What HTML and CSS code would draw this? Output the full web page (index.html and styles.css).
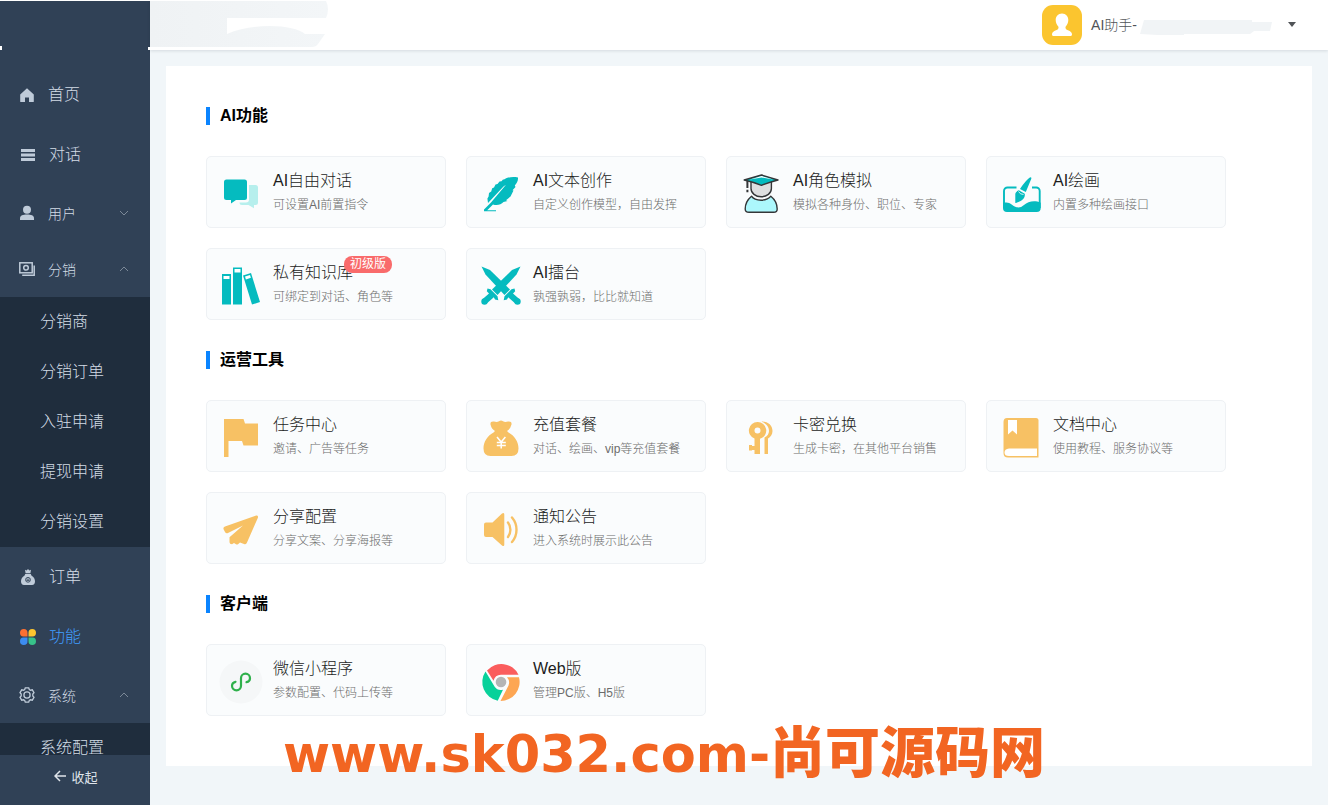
FILE: index.html
```html
<!DOCTYPE html>
<html lang="zh-CN">
<head>
<meta charset="utf-8">
<title>功能</title>
<link rel="stylesheet" href="styles.css">
</head>
<body>
<div class="app">
  <aside class="sidebar">
    <nav class="menu">
      <a class="item" href="#"><svg class="ico" viewBox="0 0 16 16"><path fill="currentColor" d="M8 1.200 1.200 7.600V14.400a.6.6 0 0 0 .6.600H6V10.500h4V15h4.200a.6.6 0 0 0 .6-.6V7.600z"/></svg><span>首页</span></a>
      <a class="item shifted" href="#"><svg class="ico" viewBox="0 0 16 16"><path fill="currentColor" d="M1 2h14v3H1zM1 6.500h14v3H1zM1 11h14v3H1z"/></svg><span>对话</span></a>
      <button class="item group" type="button"><svg class="ico" viewBox="0 0 16 16"><circle cx="8" cy="4.800" r="4" fill="currentColor"/><path fill="currentColor" d="M1 15v-1.500C1 10.500 4 9.600 8 9.600s7 .9 7 3.900V15z"/></svg><span>用户</span><svg class="chev" viewBox="0 0 10 6"><path d="M1 1l4 4 4-4"/></svg></button>
      <button class="item group" type="button"><svg class="ico" viewBox="0 0 16 16" fill="none" stroke="currentColor" stroke-width="1.500"><rect x=".8" y="1.800" width="12.400" height="10"/><circle cx="7" cy="6.800" r="2.300"/><path d="M3.200 14.200h12V4.500"/></svg><span>分销</span><svg class="chev" viewBox="0 0 10 6"><path d="M1 5l4-4 4 4"/></svg></button>
      <div class="sub">
        <a href="#">分销商</a><a href="#">分销订单</a><a href="#">入驻申请</a><a href="#">提现申请</a><a href="#">分销设置</a>
      </div>
      <a class="item shifted" href="#"><svg class="ico" viewBox="0 0 16 16"><path fill="currentColor" d="M5 .8l1.600.8L8 0l1.400 1.600L11 .8l-.6 3.400H5.600zM5.200 5h5.600l.6 1.400C13.800 7.800 15 10 15 12.300 15 14.500 14 16 12 16H4c-2 0-3-1.500-3-3.700C1 10 2.200 7.800 4.600 6.400z"/><circle cx="8" cy="10.800" r="2.400" fill="none" stroke="#304156" stroke-width=".9"/><path stroke="#304156" stroke-width=".8" d="M6.500 10.200h3M6.500 11.500h3"/></svg><span>订单</span></a>
      <a class="item shifted active" href="#"><svg class="ico" viewBox="0 0 16 16"><path fill="#fc7032" d="M3.800 0A3.800 3.800 0 0 0 0 3.800C0 6 1 7.500 3.500 7.500h4V3.800A3.800 3.800 0 0 0 3.800 0z"/><path fill="#fcc52f" d="M12.200 0A3.800 3.800 0 0 1 16 3.800c0 2.200-1 3.700-3.500 3.700h-4V3.800A3.800 3.800 0 0 1 12.200 0z"/><path fill="#3c8cf0" d="M3.800 16A3.800 3.800 0 0 1 0 12.200C0 10 1 8.500 3.500 8.500h4v3.700A3.800 3.800 0 0 1 3.800 16z"/><path fill="#37c28a" d="M12.200 16a3.800 3.800 0 0 0 3.800-3.800c0-2.200-1-3.700-3.500-3.700h-4v3.700a3.800 3.800 0 0 0 3.700 3.800z"/></svg><span>功能</span></a>
      <button class="item group" type="button"><svg class="ico" viewBox="0 0 16 16" fill="none" stroke="currentColor" stroke-width="1.300"><path d="M6.300.8h3.400l.6 1.700 1.200.7 1.800-.4L15 5.700 13.800 7v2l1.200 1.300-1.700 2.900-1.800-.4-1.200.7-.6 1.700H6.300l-.6-1.700-1.200-.7-1.800.4L1 10.300 2.200 9V7L1 5.700l1.700-2.900 1.800.4 1.200-.7z"/><circle cx="8" cy="8" r="3.100"/></svg><span>系统</span><svg class="chev" viewBox="0 0 10 6"><path d="M1 5l4-4 4 4"/></svg></button>
      <div class="sub"><a href="#">系统配置</a></div>
    </nav>
    <button class="fold" type="button"><svg viewBox="0 0 12 12"><path d="M12 6H1M6 1L1 6l5 5"/></svg>收起</button>
  </aside>

  <div class="main">
    <header class="top">
      <svg class="smudge" viewBox="-2 0 182 49"><defs><linearGradient id="haze"><stop offset="0" stop-color="#eff2f4"/><stop offset="1" stop-color="#f3f6f8"/></linearGradient></defs><path fill="#fff" d="M-2 46H180V49H-2z"/><path fill="url(#haze)" d="M0 0H176Q180 8 176 17H77V33C105 21 145 24 155 33H175L168 43Q166 46 162 46H0z"/></svg>
      <button class="user" type="button">
        <svg class="avatar" viewBox="0 0 40 40"><rect width="40" height="40" rx="11" fill="#fbc52f"/><path fill="#fff" d="M20 8.500c-4 0-6.300 3-6.300 6.500 0 3 1.200 5 2.600 6.500.8 2-.3 3-2.300 3.800-2.500 1-4 2-4 4.200 0 1 .8 1.500 2 1.500h16c1.200 0 2-.5 2-1.500 0-2.200-1.500-3.200-4-4.200-2-.8-3.100-1.800-2.300-3.800 1.400-1.500 2.600-3.500 2.600-6.500 0-3.500-2.300-6.500-6.300-6.500z"/></svg>
        <span>AI助手-</span>
        <svg class="blot" viewBox="0 0 134 16"><path fill="#f1f4f6" d="M4 0H112V2H132L130 11H114L110 14H44V15H18L0 14z"/></svg>
        <svg class="caret" viewBox="0 0 8 5"><path fill="#505357" d="M0 0h8L4 5z"/></svg>
      </button>
    </header>

    <main class="panel">
      <section>
        <h2>AI功能</h2>
        <div class="cards">
          <a class="card" href="#">
            <svg viewBox="0 0 40 40"><path fill="#b6efed" d="M28 13h6.500a2.500 2.500 0 0 1 2.500 2.500v15a2.500 2.500 0 0 1-2.500 2.500H33v3.200L27.500 33H21q-2.500 0-2.500-2.500H25q3 0 3-3z"/><path fill="#05bbbf" d="M5.500 7.500h18A2.500 2.500 0 0 1 26 10v15.500a2.500 2.500 0 0 1-2.500 2.500H15l-5 3.500V28H5.500A2.500 2.500 0 0 1 3 25.500V10a2.500 2.500 0 0 1 2.500-2.500z"/></svg>
            <span class="txt"><b>AI自由对话</b><small>可设置AI前置指令</small></span></a>
          <a class="card" href="#">
            <svg viewBox="0 0 40 40"><path fill="#05bbbf" d="M37 5.500C31 4.500 26 5.500 23 7.500l-1 .1-1.500 1.600-2 .3-2 2.500-2 .5-1.500 3-1.800.8-1 3.200L8 21l-.4 3.500-1.200 2L7 31 22.500 14.500l2.500-1.800L10 30.500 3 37.500V39.200H15V38.300H6.200L12 32.500c4 1.200 8 .3 10.500-2.500l4-1-1.500-.8 4.500-3.700 3-6-1-.2L34.500 15 33.800 13.500C36 11 37.200 8.500 37 5.500z"/></svg>
            <span class="txt"><b>AI文本创作</b><small>自定义创作模型，自由发挥</small></span></a>
          <a class="card" href="#">
            <svg viewBox="0 0 40 40" stroke="#343638" stroke-width="1.400" stroke-linejoin="round"><path fill="#dedfe0" d="M10 8v8.500c0 4.500 4.500 8.300 10.200 8.300s10.200-3.800 10.200-8.300V8z"/><path fill="#05bbbf" d="M3.200 8Q12 5.500 20.500 3 29 5.500 37 8 29 10 20.500 13.300 12 10 3.200 8z"/><path fill="#fff" stroke="none" d="M9 7.500Q15 5.500 20.500 4 26 5.500 32 7.500L20.500 5.500z"/><path fill="none" d="M6.400 9v7M6.400 17.800v2.500" stroke-width="2"/><path fill="#acf7fc" d="M10.500 24.200C14 29.500 26 29.500 29.800 24.200 34 27.500 36.200 31.500 36.200 37q0 3.300-3.500 3.300H8Q4.200 40.300 4.200 37C4.200 31.500 6.500 27.500 10.500 24.200z"/></svg>
            <span class="txt"><b>AI角色模拟</b><small>模拟各种身份、职位、专家</small></span></a>
          <a class="card" href="#">
            <svg viewBox="0 0 40 40"><path fill="none" stroke="#05bbbf" stroke-width="1.900" d="M15.500 15.500H6.500A3.500 3.500 0 0 0 3 19v17M31 15.500h4.200a3.500 3.500 0 0 1 3.500 3.500v17"/><path fill="#05bbbf" d="M2 31c4-1 6-.5 9 1.800 5 3.700 8 3.500 12 .2 4-3.300 10-5 16.700-2.300V36a4 4 0 0 1-4 4H6a4 4 0 0 1-4-4zM29.500 5.300c1 0 1 .7.700 1.700L24.800 20 19 17C22.500 11.500 27 6.500 29.500 5.300zM17.800 18.300l6 3.500c.6 5-3.500 7.600-9.500 9.200V22c0-1.500 1.500-3 3.500-3.700z"/><path stroke="#fff" stroke-width=".8" fill="none" d="M17.500 19.500q1.500 3 5 3"/></svg>
            <span class="txt"><b>AI绘画</b><small>内置多种绘画接口</small></span></a>
          <a class="card" href="#">
            <svg viewBox="0 0 40 40"><path fill="#05bbbf" d="M1 10h9v30.500H1zM12 3.500h9v37h-9zM22 11.500L30 9l9 29-8 2.500z"/><path fill="#fff" d="M2.500 12h6v3h-6zM13.500 5h6v3.500h-6zM24 12.500l5-1.600.9 2.900-5 1.600z"/></svg>
            <span class="txt"><b>私有知识库<em class="badge">初级版</em></b><small>可绑定到对话、角色等</small></span></a>
          <a class="card" href="#">
            <svg viewBox="0 0 40 40"><g id="sword" fill="#05bbbf"><path d="M39.500 2.500l-4 8L16.500 31l-5.500-5.500L31 6z"/><path d="M6.500 24.500l3 .7 7 7 .8 4-3.300-.7-1.200-2.200-6.500 5.700-4.300-4.300 6-5.200-2.200-2.200z"/><circle cx="3.500" cy="37.500" r="3.200"/></g><use href="#sword" transform="matrix(-1 0 0 1 40 0)"/></svg>
            <span class="txt"><b>AI擂台</b><small>孰强孰弱，比比就知道</small></span></a>
        </div>
      </section>

      <section>
        <h2>运营工具</h2>
        <div class="cards">
          <a class="card" href="#">
            <svg viewBox="0 0 40 40" fill="#f7c164"><path d="M3 3h19.500l1.500 4.500h13v22H22.500L21 25H7.500v16H3z"/></svg>
            <span class="txt"><b>任务中心</b><small>邀请、广告等任务</small></span></a>
          <a class="card" href="#">
            <svg viewBox="0 0 40 40" fill="#f7c164"><path d="M13 5.500q3 1 5-.3 2-1.300 4 0 2 1.300 5 .3 4-.5 3.500 3-1 4.500-4.500 6.500l1.500 1.500C34 20 37.500 26 37.500 32.500q0 7.500-7 7.500h-21q-7 0-7-7.500C2.500 26 6 20 12.500 16.500L14 15q-3.500-2-4.500-6.500-.5-3.500 3.500-3z"/><path fill="none" stroke="#fff" stroke-width="1.500" d="M16 21l4.200 5 4.200-5M20.200 26v6.500M15.800 26.500h9M15.800 29.500h9"/></svg>
            <span class="txt"><b>充值套餐</b><small>对话、绘画、vip等充值套餐</small></span></a>
          <a class="card" href="#">
            <svg viewBox="0 0 40 40" fill="#f7c164"><path d="M20.500 5.500c7 0 11 4 11 9.500 0 3.500-2 6-4.500 7.500V38h-3.500V21.500C26.500 20 28 17.500 28 15c0-4.500-3-7.500-7.500-9.500z"/><path fill-rule="evenodd" d="M16.500 6a8.500 8.500 0 0 0-3 16.500V30H11v-1H8v5.500h3V34h2.500v4h5.500V22.700A8.500 8.500 0 0 0 16.500 6zm0 5.500a3 3 0 1 1 0 6 3 3 0 0 1 0-6z"/></svg>
            <span class="txt"><b>卡密兑换</b><small>生成卡密，在其他平台销售</small></span></a>
          <a class="card" href="#">
            <svg viewBox="0 0 40 40" fill="#f7c164"><path d="M6 2h29a2.500 2.500 0 0 1 2.500 2.500v37H7q-4.500 0-4.500-4.500V6Q2.500 2 6 2z"/><path fill="#fff" d="M7 4h9v14.500l-4.500-4-4.500 4zM8 32.500H36v7.500H8q-4.500 0-4.500-3.500T8 32.500z"/></svg>
            <span class="txt"><b>文档中心</b><small>使用教程、服务协议等</small></span></a>
          <a class="card" href="#">
            <svg viewBox="0 0 40 40" fill="#f7c164"><path d="M34.500 7.700c2-.6 3 .5 2.300 2.300L26 34.500q-.8 2.500-3 1.500l-4-1.500-2 1.700q-1 .8-2 0L13 35l-2 1.200q-2.500 0-2.500-2v-5L22 17.500 7 25q-2 .7-3-1l-1.300-2.500q-1-2 1.300-3z"/></svg>
            <span class="txt"><b>分享配置</b><small>分享文案、分享海报等</small></span></a>
          <a class="card" href="#">
            <svg viewBox="0 0 40 40" fill="#f7c164"><path d="M5 14.500h6.500L21 5.500q2.300-1.500 2.300 1v30q0 2.500-2.300 1L11.500 29H5q-2 0-2-2V16.500q0-2 2-2z"/><path fill="none" stroke="#f7c164" stroke-width="2.400" stroke-linecap="round" d="M27 14.500c3.200 4 3.200 10.500 0 14.500M31 9.500c6 7 6 17.500 0 24.500"/></svg>
            <span class="txt"><b>通知公告</b><small>进入系统时展示此公告</small></span></a>
        </div>
      </section>

      <section>
        <h2>客户端</h2>
        <div class="cards">
          <a class="card" href="#">
            <svg viewBox="0 0 40 40"><circle cx="20" cy="22" r="21.500" fill="#f5f7f8"/><path fill="none" stroke="#2fb04b" stroke-width="2.200" stroke-linecap="round" d="M25.500 22.200c2-.4 3.500-2 3.500-4a4.500 4.500 0 0 0-9 0v7.600a4.500 4.500 0 0 1-9 0c0-2 1.500-3.600 3.500-4"/></svg>
            <span class="txt"><b>微信小程序</b><small>参数配置、代码上传等</small></span></a>
          <a class="card" href="#">
            <svg viewBox="0 0 40 40"><path fill="#fa5d5d" d="M6 10.500a19 19 0 0 1 31.500 4.300H20a8 8 0 0 0-7.500 6z"/><path fill="#fda653" d="M38 17.200a19 19 0 0 1-18.500 23.800l8-15.500a8 8 0 0 0-1.500-8.300z"/><path fill="#08d19a" d="M4.500 11.500a19 19 0 0 0 12.200 29.200l5.300-10.900a8 8 0 0 1-8.500-3.200z"/><circle cx="20" cy="22" r="5.300" fill="#b5b5b5"/></svg>
            <span class="txt"><b>Web版</b><small>管理PC版、H5版</small></span></a>
        </div>
      </section>
    </main>
  </div>
</div>
<div class="watermark"><span>www.sk032.com-</span><span class="cn">尚可源码网</span></div>
</body>
</html>
```
FILE: styles.css
```css
* { box-sizing: border-box; }
body {
  margin: 0;
  font-family: "Liberation Sans", "Noto Sans CJK SC", sans-serif;
  background: #f1f6f9;
}
a { color: inherit; text-decoration: none; }
button { border: 0; padding: 0; background: none; font: inherit; color: inherit; cursor: pointer; }

.app {
  display: flex;
  height: 100vh;
  overflow: hidden;
  border-top: 1px solid #fff;
}

.sidebar {
  display: flex;
  flex-direction: column;
  flex: 0 0 150px;
  background: linear-gradient(#fff, #fff) 0 45px / 2px 4px no-repeat #304156;
  color: #d3dce6;
  font-weight: 300;
}
.menu { flex: 1; min-height: 0; overflow: hidden; padding-top: 64px; }
.item {
  display: flex;
  align-items: center;
  gap: 13px;
  width: 100%;
  height: 60px;
  padding: 0 21px 0 19px;
  font-size: 16px;
}
.item span { padding-bottom: 4px; }
.item.shifted { padding-left: 20px; }
.item.group { height: 56px; font-size: 14px; }
.item.group span { padding-bottom: 1px; }
.item.active { color: #409eff; }
.ico { width: 16px; height: 16px; color: #bfcbd9; }
.chev { width: 10px; height: 6px; margin-left: auto; fill: none; stroke: #7c8998; stroke-width: 1; }
.sub { background: #1f2d3d; }
.sub a { display: block; height: 50px; padding-left: 40px; line-height: 50px; font-size: 16px; }
.fold {
  display: flex;
  align-items: center;
  justify-content: center;
  gap: 5px;
  flex: 0 0 50px;
  padding: 0 0 8px 2px;
  font-size: 13px;
  font-weight: 400;
  color: #dfe4ea;
}
.fold svg { width: 12px; height: 12px; fill: none; stroke: currentColor; stroke-width: 1.500; }

.main { flex: 1; min-width: 0; }
.top {
  display: flex;
  justify-content: space-between;
  height: 49px;
  background: #fff;
  box-shadow: 0 1px 3px rgba(0, 21, 41, .12);
}
.smudge { width: 182px; height: 49px; margin-left: -2px; }
.user {
  display: flex;
  align-items: center;
  padding: 0 32px 2px 0;
  font-size: 14px;
  font-weight: 300;
  color: #505357;
}
.user span { padding-bottom: 1px; }
.avatar { width: 40px; height: 40px; margin-right: 9px; }
.blot { width: 134px; height: 16px; margin: 6px 14px 0 3px; }
.caret { width: 8px; height: 5px; }

.panel {
  margin: 16px;
  padding: 40px 40px 50px;
  background: #fff;
}
section + section { margin-top: 30px; }
h2 {
  display: flex;
  align-items: center;
  gap: 10px;
  margin: 0 0 30px;
  font-size: 16px;
  line-height: 20px;
  color: #000;
}
h2::before { content: ""; width: 4px; height: 18px; background: #0a84ff; }
.cards { display: flex; flex-wrap: wrap; gap: 20px; }
.card {
  display: flex;
  align-items: center;
  gap: 12px;
  width: 240px;
  height: 72px;
  padding: 0 14px;
  border: 1px solid #eef1f4;
  border-radius: 5px;
  background: #fafcfd;
}
.card > svg { flex: 0 0 40px; height: 40px; overflow: visible; }
.txt { display: flex; flex-direction: column; padding-top: 2px; white-space: nowrap; }
.txt b { position: relative; font-size: 16px; line-height: 24px; font-weight: 300; color: #1c1c1c; }
.txt small { font-size: 12px; line-height: 24px; font-weight: 300; color: #6c6c6c; }
.badge {
  position: absolute;
  left: 71px;
  top: -5px;
  padding: 0 6px;
  border-radius: 8px;
  background: #f96b6b;
  color: #fff;
  font-size: 12px;
  line-height: 17px;
  font-style: normal;
  font-weight: 400;
}

.watermark {
  position: absolute;
  left: 0;
  right: 0;
  bottom: 14px;
  display: flex;
  justify-content: center;
  align-items: baseline;
  font-family: "DejaVu Sans", sans-serif;
  font-size: 51px;
  line-height: 72px;
  font-weight: 700;
  color: #f26522;
  white-space: nowrap;
  pointer-events: none;
}
.watermark .cn { font-family: "Noto Sans CJK SC", sans-serif; font-size: 55px; font-weight: 900; }
```
